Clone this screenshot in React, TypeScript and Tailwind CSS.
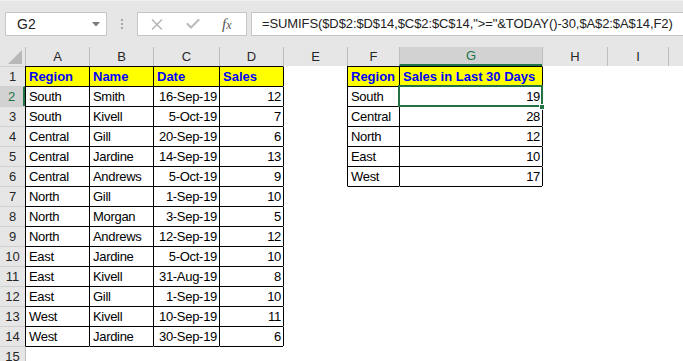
import React from "react";

const COLS = [
  { l: "A", w: 64 },
  { l: "B", w: 64 },
  { l: "C", w: 66 },
  { l: "D", w: 64 },
  { l: "E", w: 64 },
  { l: "F", w: 52 },
  { l: "G", w: 143 },
  { l: "H", w: 65 },
  { l: "I", w: 61 },
  { l: "", w: 40 },
];

type Cell = { v: string; r?: boolean; h?: boolean };

const t1: Cell[][] = [
  [{ v: "Region", h: true }, { v: "Name", h: true }, { v: "Date", h: true }, { v: "Sales", h: true }],
  [{ v: "South" }, { v: "Smith" }, { v: "16-Sep-19", r: true }, { v: "12", r: true }],
  [{ v: "South" }, { v: "Kivell" }, { v: "5-Oct-19", r: true }, { v: "7", r: true }],
  [{ v: "Central" }, { v: "Gill" }, { v: "20-Sep-19", r: true }, { v: "6", r: true }],
  [{ v: "Central" }, { v: "Jardine" }, { v: "14-Sep-19", r: true }, { v: "13", r: true }],
  [{ v: "Central" }, { v: "Andrews" }, { v: "5-Oct-19", r: true }, { v: "9", r: true }],
  [{ v: "North" }, { v: "Gill" }, { v: "1-Sep-19", r: true }, { v: "10", r: true }],
  [{ v: "North" }, { v: "Morgan" }, { v: "3-Sep-19", r: true }, { v: "5", r: true }],
  [{ v: "North" }, { v: "Andrews" }, { v: "12-Sep-19", r: true }, { v: "12", r: true }],
  [{ v: "East" }, { v: "Jardine" }, { v: "5-Oct-19", r: true }, { v: "10", r: true }],
  [{ v: "East" }, { v: "Kivell" }, { v: "31-Aug-19", r: true }, { v: "8", r: true }],
  [{ v: "East" }, { v: "Gill" }, { v: "1-Sep-19", r: true }, { v: "10", r: true }],
  [{ v: "West" }, { v: "Kivell" }, { v: "10-Sep-19", r: true }, { v: "11", r: true }],
  [{ v: "West" }, { v: "Jardine" }, { v: "30-Sep-19", r: true }, { v: "6", r: true }],
];

const t2: Cell[][] = [
  [{ v: "Region", h: true }, { v: "Sales in Last 30 Days", h: true }],
  [{ v: "South" }, { v: "19", r: true }],
  [{ v: "Central" }, { v: "28", r: true }],
  [{ v: "North" }, { v: "12", r: true }],
  [{ v: "East" }, { v: "10", r: true }],
  [{ v: "West" }, { v: "17", r: true }],
];

function inTable(r: number, c: number) {
  if (r >= 1 && r <= 14 && c >= 0 && c <= 3) return true;
  if (r >= 1 && r <= 6 && c >= 5 && c <= 6) return true;
  return false;
}

function getCell(r: number, c: number): Cell | null {
  if (r >= 1 && r <= 14 && c >= 0 && c <= 3) return t1[r - 1][c];
  if (r >= 1 && r <= 6 && c >= 5 && c <= 6) return t2[r - 1][c - 5];
  return null;
}

const FONT = { fontFamily: '"Liberation Sans", Arial, sans-serif' };

export default function App() {
  const rows = Array.from({ length: 15 }, (_, i) => i + 1);
  return (
    <div className="w-[683px] h-[361px] overflow-hidden bg-white relative" style={FONT}>
      {/* formula bar area */}
      <div className="h-[47px] bg-[#e6e6e6] flex items-start pt-[12px] border-t border-[#f0f0f0]">
        <div className="shrink-0 ml-[5px] w-[102px] h-[24px] bg-white border border-[#c6c6c6] flex items-center justify-between pl-[11px] pr-[6px] -mt-px">
          <span className="text-[14px] text-[#222]">G2</span>
          <svg width="8" height="5" viewBox="0 0 8 5">
            <path d="M0 0 H8 L4 4.5 Z" fill="#7a7a7a" />
          </svg>
        </div>
        <div className="shrink-0 w-[30px] h-[24px] flex flex-col items-center justify-center gap-[2px] -mt-px">
          <div className="w-[2px] h-[2px] bg-[#a6a6a6]" />
          <div className="w-[2px] h-[2px] bg-[#a6a6a6]" />
          <div className="w-[2px] h-[2px] bg-[#a6a6a6]" />
        </div>
        <div className="shrink-0 w-[110px] h-[24px] bg-white border border-[#c6c6c6] flex items-center -mt-px">
          <svg className="ml-[13px] shrink-0" width="12" height="11" viewBox="0 0 12 11">
            <path d="M1 0.5 L11 10.5 M11 0.5 L1 10.5" stroke="#b3b3b3" strokeWidth="1.4" fill="none" />
          </svg>
          <svg className="ml-[23px] shrink-0" width="14" height="10" viewBox="0 0 14 10">
            <path d="M1.5 5 L5 8.5 L12.5 1" stroke="#bdbdbd" strokeWidth="2.2" strokeLinecap="round" strokeLinejoin="round" fill="none" />
          </svg>
          <span
            className="ml-[22px] text-[#555] italic text-[15px] leading-none"
            style={{ fontFamily: '"Liberation Serif", "Times New Roman", serif' }}
          >
            f<span className="text-[12px]">x</span>
          </span>
        </div>
        <div className="ml-[4px] flex-1 min-w-0 overflow-hidden h-[24px] bg-white border border-[#c6c6c6] border-r-0 flex items-center pl-[10px] -mt-px">
          <span className="text-[13px] text-[#222] whitespace-nowrap tracking-[-0.1px]">
            =SUMIFS($D$2:$D$14,$C$2:$C$14,"&gt;="&amp;TODAY()-30,$A$2:$A$14,F2)
          </span>
        </div>
      </div>

      {/* column headers */}
      <div className="flex h-[19px] bg-[#e6e6e6]">
        <div className="w-[25px] h-[19px] shrink-0 flex items-end justify-end pr-[3px] pb-[2px]">
          <svg width="14" height="14" viewBox="0 0 14 14">
            <path d="M14 0 V14 H0 Z" fill="#b8b8b8" />
          </svg>
        </div>
        {COLS.map((c, i) => {
          const sel = c.l === "G";
          return (
            <div
              key={i}
              className={
                "shrink-0 h-[19px] border-l border-[#bdbdbd] flex items-center justify-center text-[13px] " +
                (sel ? "bg-[#d2d2d2] text-[#217346] border-b-2 border-b-[#217346]" : "text-[#262626]")
              }
              style={{ width: c.w }}
            >
              {c.l}
            </div>
          );
        })}
      </div>

      {/* rows */}
      <div className="relative">
        {rows.map((r) => {
          const rowSel = r === 2;
          return (
            <div key={r} className="flex h-[20px]">
              <div
                className={
                  "w-[25px] shrink-0 h-[20px] border-t border-[#d0d0d0] flex items-center justify-center text-[13px] leading-[19px] " +
                  (rowSel
                    ? "bg-[#d2d2d2] text-[#217346] border-r-2 border-r-[#217346]"
                    : "bg-[#e6e6e6] text-[#262626]")
                }
              >
                {r}
              </div>
              {COLS.map((c, ci) => {
                const cell = getCell(r, ci);
                const inT = inTable(r, ci);
                const topBlack = inT || inTable(r - 1, ci);
                const leftBlack = inT || inTable(r, ci - 1);
                let leftCls = "border-l-transparent";
                if (leftBlack) leftCls = "border-l-black";
                else if (ci === 0) leftCls = "border-l-[#bdbdbd]";
                const topCls = topBlack ? "border-t-black" : "border-t-transparent";
                return (
                  <div
                    key={ci}
                    className={
                      "shrink-0 h-[20px] border-l border-t whitespace-nowrap overflow-visible text-[13px] leading-[19px] " +
                      leftCls +
                      " " +
                      topCls +
                      " " +
                      (cell?.h ? "bg-[#ffff00] text-[#0000ff] font-bold pl-[3px] " : "") +
                      (cell && !cell.h
                        ? cell.r
                          ? "text-black text-right pr-[2px] tracking-[-0.3px] "
                          : "text-black pl-[3px] tracking-[-0.3px] "
                        : "")
                    }
                    style={{ width: c.w }}
                  >
                    {cell ? cell.v : ""}
                  </div>
                );
              })}
            </div>
          );
        })}
        {/* selection G2 */}
        <div className="absolute left-[398px] top-[19px] w-[145px] h-[22px] border-2 border-[#217346] pointer-events-none" />
        <div className="absolute left-[539px] top-[38px] w-[6px] h-[6px] bg-[#217346] border border-white pointer-events-none" />
      </div>
    </div>
  );
}
